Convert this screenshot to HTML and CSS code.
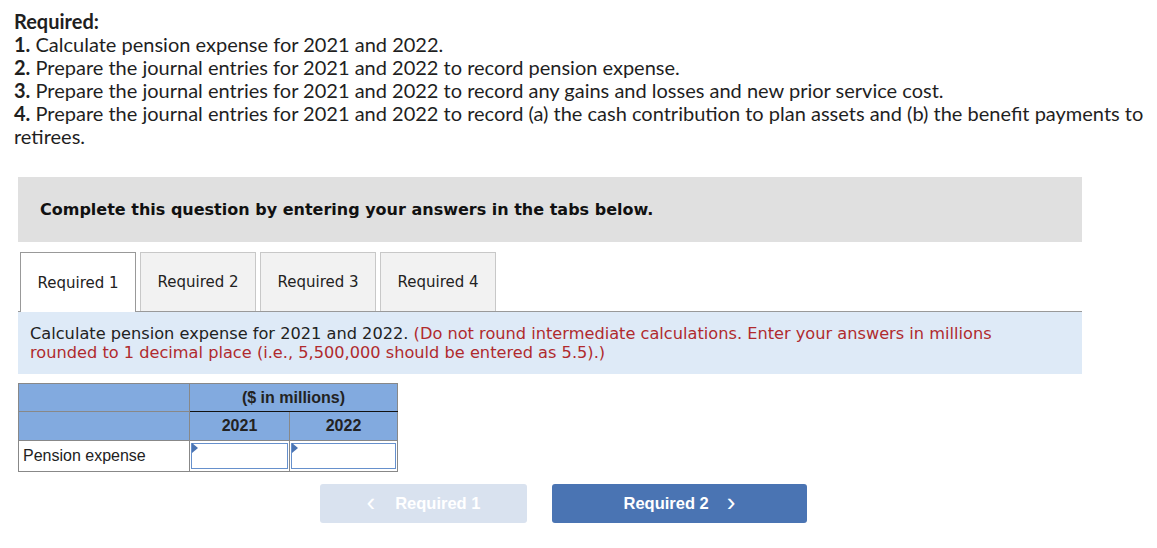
FILE: index.html
```html
<!DOCTYPE html>
<html lang="en">
<head>
    <meta charset="UTF-8">
    <title>Pension Expense - Required</title>
    <link rel="stylesheet" href="styles.css">
</head>
<body>
    <div class="required">
        <p><b>Required:</b></p>
        <p><b>1.</b> Calculate pension expense for 2021 and 2022.</p>
        <p><b>2.</b> Prepare the journal entries for 2021 and 2022 to record pension expense.</p>
        <p><b>3.</b> Prepare the journal entries for 2021 and 2022 to record any gains and losses and new prior service cost.</p>
        <p><b>4.</b> Prepare the journal entries for 2021 and 2022 to record (a) the cash contribution to plan assets and (b) the benefit payments to retirees.</p>
    </div>

    <div class="panel">
        <div class="prompt">Complete this question by entering your answers in the tabs below.</div>

        <div class="tabs">
            <div class="tab active">Required 1</div>
            <div class="tab">Required 2</div>
            <div class="tab">Required 3</div>
            <div class="tab">Required 4</div>
        </div>

        <div class="instructions">
            Calculate pension expense for 2021 and 2022. <span class="hint">(Do not round intermediate calculations. Enter your answers in millions rounded to 1 decimal place (i.e., 5,500,000 should be entered as 5.5).)</span>
        </div>

        <table class="answer">
            <tr class="head">
                <th class="blank"></th>
                <th colspan="2" class="units">($ in millions)</th>
            </tr>
            <tr class="head">
                <th class="blank"></th>
                <th class="year">2021</th>
                <th class="year">2022</th>
            </tr>
            <tr>
                <td class="label">Pension expense</td>
                <td class="cell"><div class="input"></div></td>
                <td class="cell"><div class="input"></div></td>
            </tr>
        </table>

        <div class="nav">
            <button class="nav-btn prev" disabled><span class="chev">&lsaquo;</span>Required 1</button>
            <button class="nav-btn next">Required 2<span class="chev">&rsaquo;</span></button>
        </div>
    </div>
</body>
</html>
```

FILE: styles.css
```css
body {
    margin: 0;
    padding: 10px 4px 0 14px;
    background-color: #fff;
    color: #1a1a1a;
}
.required {
    font-family: Lato, "Open Sans", sans-serif;
    font-size: 20px;
    line-height: 23px;
    color: #1f1f1f;
}
.required p {
    margin: 0;
}
.panel {
    width: 1064px;
    margin: 29px 0 0 4px;
}
.prompt {
    background-color: #e0e0e0;
    height: 65px;
    padding: 0 22px;
    display: flex;
    align-items: center;
    font-family: "DejaVu Sans", Verdana, sans-serif;
    font-weight: bold;
    font-size: 16px;
    color: #111;
}
.tabs {
    display: flex;
    gap: 4px;
    margin-top: 10px;
    padding-left: 2px;
    border-bottom: 1px solid #999;
}
.tab {
    width: 114px;
    height: 58px;
    display: flex;
    align-items: center;
    justify-content: center;
    background-color: #f2f2f2;
    border: 1px solid #c8c8c8;
    border-bottom: none;
    font-family: "DejaVu Sans", Verdana, sans-serif;
    font-size: 15px;
    color: #222;
}
.tab.active {
    background-color: #fff;
    border-color: #999;
    height: 59px;
    margin-bottom: -1px;
}
.instructions {
    background-color: #deeaf7;
    padding: 12px 40px 8px 12px;
    height: 42px;
    font-family: "DejaVu Sans", Verdana, sans-serif;
    font-size: 16.2px;
    line-height: 19px;
    color: #222;
}
.hint {
    color: #b02a2e;
}
.answer {
    margin-top: 9px;
    border-collapse: collapse;
    font-family: "Liberation Sans", Arial, sans-serif;
    font-size: 16px;
    border: 1px solid #888;
}
.answer th, .answer td {
    border: 1px solid #888;
    padding: 0;
    height: 27px;
}
.answer td {
    height: 28px;
}
.answer .head th {
    background-color: #82aadf;
    color: #222;
    font-weight: bold;
    text-align: center;
}
.answer .blank {
    width: 170px;
}
.answer .units {
    border-bottom: 1px solid #111;
}
.answer th.year {
    width: 99px;
    height: 28px;
}
.answer th.year + th.year {
    width: 107px;
}
.answer .label {
    padding-left: 4px;
    color: #222;
    text-align: left;
}
.answer .cell {
    padding: 1px;
}
.input {
    position: relative;
    height: 24px;
    border: 1px solid #6690cc;
    background-color: #fff;
}
.input::before {
    content: "";
    position: absolute;
    top: -1px;
    left: 0;
    border-top: 5px solid transparent;
    border-bottom: 5px solid transparent;
    border-left: 6px solid #4a74b3;
}
.nav {
    display: flex;
    gap: 25px;
    margin-top: 12px;
    padding-left: 302px;
}
.nav-btn {
    height: 39px;
    border: none;
    border-radius: 3px;
    font-family: "Liberation Sans", Arial, sans-serif;
    font-weight: bold;
    font-size: 16.5px;
    color: #fff;
    display: flex;
    align-items: center;
    justify-content: center;
    cursor: pointer;
}
.nav-btn.prev {
    width: 207px;
    background-color: #d9e2ef;
    cursor: default;
}
.nav-btn.next {
    width: 255px;
    background-color: #4a74b3;
}
.chev {
    font-size: 26px;
    font-weight: normal;
    line-height: 20px;
    margin: -3px 0 0 0;
}
.prev .chev {
    margin-right: 20px;
}
.next .chev {
    margin-left: 18px;
}
```
